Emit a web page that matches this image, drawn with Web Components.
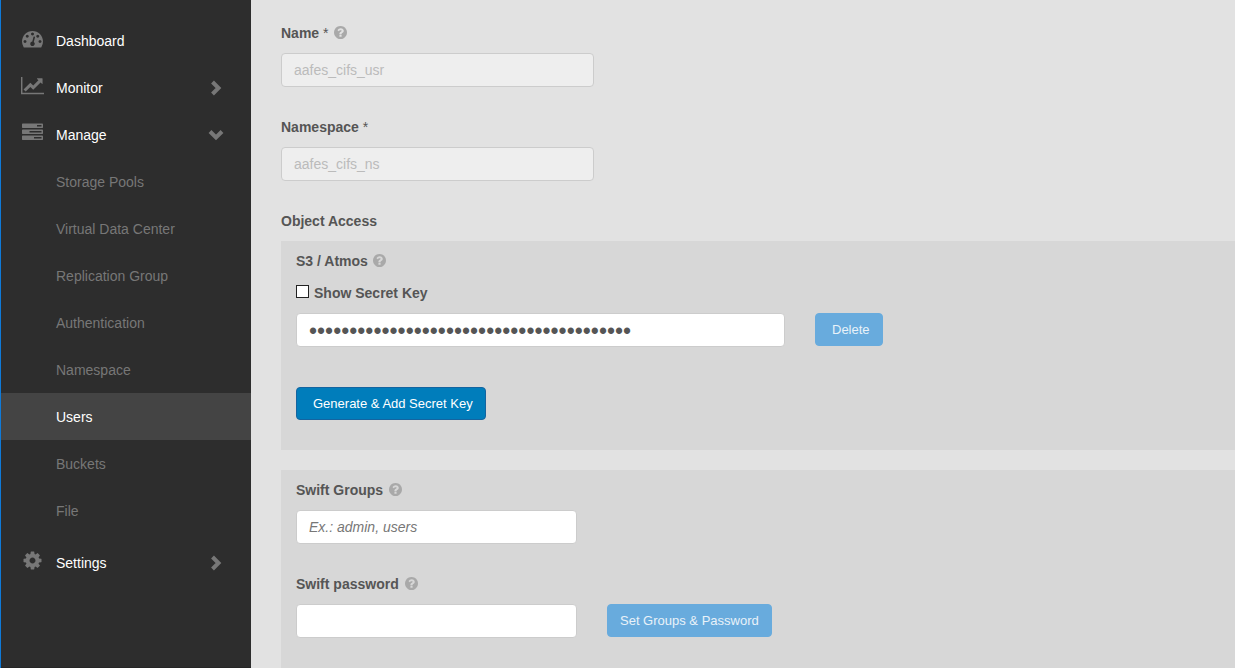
<!DOCTYPE html>
<html lang="en">
<head>
  <meta charset="utf-8">
  <meta name="viewport" content="width=device-width, initial-scale=1">
  <title>Users</title>
  <style>
    * {
      box-sizing: border-box;
    }
    body {
      margin: 0;
      font-family: "Liberation Sans", Arial, sans-serif;
      font-size: 14px;
      line-height: 20px;
      color: #555;
      background: #e2e2e2;
    }
  </style>
</head>
<body>
  <app-shell>
    <side-nav slot="nav">
      <nav-item icon="dashboard">Dashboard</nav-item>
      <nav-item icon="chart" chevron="right">Monitor</nav-item>
      <nav-item icon="tasks" chevron="down">Manage</nav-item>
      <nav-item sub>Storage Pools</nav-item>
      <nav-item sub>Virtual Data Center</nav-item>
      <nav-item sub>Replication Group</nav-item>
      <nav-item sub>Authentication</nav-item>
      <nav-item sub>Namespace</nav-item>
      <nav-item sub active>Users</nav-item>
      <nav-item sub>Buckets</nav-item>
      <nav-item sub class="last">File</nav-item>
      <nav-item icon="cog" chevron="right">Settings</nav-item>
    </side-nav>

    <form-field label="Name" required help value="aafes_cifs_usr" disabled size="medium"></form-field>
    <form-field label="Namespace" required value="aafes_cifs_ns" disabled size="medium"></form-field>

    <form-section heading="Object Access">
      <form-panel>
        <panel-title>S3 / Atmos</panel-title>
        <check-field>Show Secret Key</check-field>
        <form-field name="Secret key" type="password" value="0123456789012345678901234567890123456789" size="large">
          <action-button slot="action" muted inset>Delete</action-button>
        </form-field>
        <action-button inset class="generate">Generate &amp; Add Secret Key</action-button>
      </form-panel>
      <form-panel grow>
        <form-field label="Swift Groups" help placeholder="Ex.: admin, users"></form-field>
        <form-field label="Swift password" help type="password">
          <action-button slot="action" muted>Set Groups &amp; Password</action-button>
        </form-field>
      </form-panel>
    </form-section>
  </app-shell>

  <script>
    const ICONS = {
      dashboard: {
        box: '0 0 1792 1792',
        width: 21,
        path: 'M384 1152q0-53-37.5-90.5t-90.5-37.5-90.5 37.5-37.5 90.5 37.5 90.5 90.5 37.5 90.5-37.5 37.5-90.5zm192-448q0-53-37.5-90.5t-90.5-37.5-90.5 37.5-37.5 90.5 37.5 90.5 90.5 37.5 90.5-37.5 37.5-90.5zm428 481l101-382q6-26-7.5-48.5t-38.5-29.5-48 6.5-30 39.5l-101 382q-60 5-107 43.5t-63 98.5q-20 77 20 146t117 89 146-20 89-117q16-60-6-117t-72-91zm660-33q0-53-37.5-90.5t-90.5-37.5-90.5 37.5-37.5 90.5 37.5 90.5 90.5 37.5 90.5-37.5 37.5-90.5zm-640-640q0-53-37.5-90.5t-90.5-37.5-90.5 37.5-37.5 90.5 37.5 90.5 90.5 37.5 90.5-37.5 37.5-90.5zm448 192q0-53-37.5-90.5t-90.5-37.5-90.5 37.5-37.5 90.5 37.5 90.5 90.5 37.5 90.5-37.5 37.5-90.5zm320 448q0 261-141 483-19 29-54 29h-1402q-35 0-54-29-141-221-141-483 0-182 71-348t191-286 286-191 348-71 348 71 286 191 191 286 71 348z'
      },
      chart: {
        box: '0 0 2048 1792',
        width: 23,
        path: 'M2048 1536v128h-2048v-1536h128v1408h1920zm-128-1248v435q0 21-19.5 29.5t-35.5-7.5l-121-121-633 633q-10 10-23 10t-23-10l-233-233-416 416-192-192 585-585q10-10 23-10t23 10l233 233 464-464-121-121q-16-16-7.5-35.5t29.5-19.5h435q14 0 23 9t9 23z'
      },
      tasks: {
        box: '0 0 1792 1792',
        width: 21,
        path: 'M1024 1408h640v-128h-640v128zm-384-512h1024v-128h-1024v128zm640-512h384v-128h-384v128zm512 832v256q0 26-19 45t-45 19h-1664q-26 0-45-19t-19-45v-256q0-26 19-45t45-19h1664q26 0 45 19t19 45zm0-512v256q0 26-19 45t-45 19h-1664q-26 0-45-19t-19-45v-256q0-26 19-45t45-19h1664q26 0 45 19t19 45zm0-512v256q0 26-19 45t-45 19h-1664q-26 0-45-19t-19-45v-256q0-26 19-45t45-19h1664q26 0 45 19t19 45z'
      },
      cog: {
        box: '0 0 1792 1792',
        width: 21,
        path: 'M1152 896q0-106-75-181t-181-75-181 75-75 181 75 181 181 75 181-75 75-181zm512-109v222q0 12-8 23t-20 13l-185 28q-19 54-39 91 35 50 107 138 10 12 10 25t-9 23q-27 37-99 108t-94 71q-12 0-26-9l-138-108q-44 23-91 38-16 136-29 186-7 28-36 28h-222q-14 0-24.5-8.5t-11.5-21.5l-28-184q-49-16-90-37l-141 107q-10 9-25 9-14 0-25-11-126-114-165-168-7-10-7-23 0-12 8-23 15-21 51-66.5t54-70.5q-27-50-41-99l-183-27q-13-2-21-12.5t-8-23.5v-222q0-12 8-23t19-13l186-28q14-46 39-92-40-57-107-138-10-12-10-24 0-10 9-23 26-36 98.5-107.5t94.5-71.5q13 0 26 10l138 107q44-23 91-38 16-136 29-186 7-28 36-28h222q14 0 24.5 8.5t11.5 21.5l28 184q49 16 90 37l142-107q9-9 24-9 13 0 25 10 129 119 165 170 7 8 7 22 0 12-8 23-15 21-51 66.5t-54 70.5q26 50 41 98l183 28q13 2 21 12.5t8 23.5z'
      }
    };

    const CHEVRONS = {
      right: 'M4.5 2 L10.5 8 L4.5 14',
      down: 'M2 4.5 L8 10.5 L14 4.5'
    };

    class appShell extends HTMLElement {
      constructor() {
        super();
        this.attachShadow({mode: 'open'}).innerHTML = `
          <style>
            :host {
              display: flex;
              min-height: 100vh;
              border-left: 1px solid #0f7ad8;
              box-sizing: border-box;
            }
            main {
              flex: 1;
              min-width: 0;
              display: flex;
              flex-direction: column;
              gap: 30px;
              padding: 23px 0 0 30px;
            }
          </style>
          <slot name="nav"></slot>
          <main><slot></slot></main>
        `;
      }
    }

    class sideNav extends HTMLElement {
      constructor() {
        super();
        this.attachShadow({mode: 'open'}).innerHTML = `
          <style>
            :host {
              flex: 0 0 250px;
              display: block;
              box-sizing: border-box;
              background: #2d2d2d;
              border-bottom: 1px solid #262626;
            }
            nav {
              padding-top: 17px;
            }
            ::slotted(.last) {
              margin-bottom: 5px;
            }
          </style>
          <nav><slot></slot></nav>
        `;
      }
    }

    class navItem extends HTMLElement {
      constructor() {
        super();
        this.attachShadow({mode: 'open'});
      }

      connectedCallback() {
        const icon = ICONS[this.getAttribute('icon')];
        const chevron = CHEVRONS[this.getAttribute('chevron')];
        this.shadowRoot.innerHTML = `
          <style>
            :host {
              display: block;
              color: #fff;
            }
            :host([sub]) {
              color: #777;
            }
            :host([active]) {
              color: #fff;
              background: #444;
            }
            a {
              display: flex;
              align-items: center;
              gap: 12px;
              height: 47px;
              padding: 0 27px 0 20px;
              box-sizing: border-box;
              color: inherit;
              text-decoration: none;
            }
            .icon {
              flex: 0 0 23px;
              display: flex;
              justify-content: center;
              padding-bottom: 4px;
            }
            .icon svg {
              flex: none;
              fill: #777;
            }
            .text {
              flex: 1;
            }
            .chevron {
              fill: none;
              stroke: #777;
              stroke-width: 4;
            }
          </style>
          <a href="#">
            <span class="icon">${icon ? `<svg width="${icon.width}" height="21" viewBox="${icon.box}" aria-hidden="true"><path d="${icon.path}"/></svg>` : ''}</span>
            <span class="text"><slot></slot></span>
            ${chevron ? `<svg class="chevron" width="16" height="16" viewBox="0 0 16 16" aria-hidden="true"><path d="${chevron}"/></svg>` : ''}
          </a>
        `;
      }
    }

    class helpIcon extends HTMLElement {
      constructor() {
        super();
        this.attachShadow({mode: 'open'}).innerHTML = `
          <style>
            :host {
              display: flex;
              padding-bottom: 2px;
            }
            svg {
              fill: #a9a9a9;
            }
          </style>
          <svg width="13" height="13" viewBox="128 128 1536 1536" aria-hidden="true"><path d="M1024 1376v-192q0-14-9-23t-23-9h-192q-14 0-23 9t-9 23v192q0 14 9 23t23 9h192q14 0 23-9t9-23zm256-672q0-88-55.5-163t-138.5-116-170-41q-243 0-371 213-15 24 8 42l132 100q7 6 19 6 16 0 25-12 53-68 86-92 34-24 86-24 48 0 85.5 26t37.5 59q0 38-20 61t-68 45q-63 28-115.5 86.5t-52.5 125.5v36q0 14 9 23t23 9h192q14 0 23-9t9-23q0-19 21.5-49.5t54.5-49.5q32-18 49-28.5t46-35 44.5-48 28-60.5 12.5-81zm384 192q0 209-103 385.5t-279.5 279.5-385.5 103-385.5-103-279.5-279.5-103-385.5 103-385.5 279.5-279.5 385.5-103 385.5 103 279.5 279.5 103 385.5z"/></svg>
        `;
      }
    }

    class formField extends HTMLElement {
      constructor() {
        super();
        this.attachShadow({mode: 'open'});
      }

      connectedCallback() {
        const label = this.getAttribute('label');
        this.shadowRoot.innerHTML = `
          <style>
            :host {
              display: block;
              --width: 281px;
            }
            :host([size="medium"]) {
              --width: 313px;
            }
            :host([size="large"]) {
              --width: 489px;
            }
            .label {
              display: flex;
              align-items: center;
              gap: 6px;
              margin-bottom: 10px;
            }
            label {
              font-weight: bold;
            }
            .required {
              font-weight: normal;
            }
            .row {
              display: flex;
              align-items: flex-start;
              gap: 30px;
            }
            input {
              width: var(--width);
              min-width: 0;
              height: 34px;
              padding: 0 12px;
              box-sizing: border-box;
              border: 1px solid #ccc;
              border-radius: 4px;
              background: #fff;
              color: #555;
              font-family: inherit;
              font-size: 14px;
            }
            input[type="password"] {
              padding-top: 2px;
              font-size: 23px;
            }
            input:disabled {
              background: #eee;
              color: #bbb;
            }
            input::placeholder {
              color: #777;
              font-style: italic;
            }
          </style>
          ${label ? `<div class="label">
            <label for="input">${label}${this.hasAttribute('required') ? ' <span class="required">*</span>' : ''}</label>
            ${this.hasAttribute('help') ? '<help-icon></help-icon>' : ''}
          </div>` : ''}
          <div class="row">
            <input id="input" type="${this.getAttribute('type') || 'text'}">
            <slot name="action"></slot>
          </div>
        `;
        const input = this.shadowRoot.querySelector('input');
        input.value = this.getAttribute('value') || '';
        input.placeholder = this.getAttribute('placeholder') || '';
        input.disabled = this.hasAttribute('disabled');
        if (!label) {
          input.setAttribute('aria-label', this.getAttribute('name'));
        }
      }
    }

    class checkField extends HTMLElement {
      constructor() {
        super();
        this.attachShadow({mode: 'open'}).innerHTML = `
          <style>
            :host {
              display: block;
              margin: 12px 0 10px;
            }
            label {
              display: flex;
              align-items: center;
              gap: 5px;
              font-weight: bold;
            }
            input {
              appearance: none;
              width: 13px;
              height: 13px;
              margin: 0 0 4px;
              border: 1px solid #222;
              background: #fff;
            }
            input:checked {
              background: #222;
              box-shadow: inset 0 0 0 2px #fff;
            }
          </style>
          <label><input type="checkbox"><span><slot></slot></span></label>
        `;
      }
    }

    class panelTitle extends HTMLElement {
      constructor() {
        super();
        this.attachShadow({mode: 'open'}).innerHTML = `
          <style>
            :host {
              display: flex;
              align-items: center;
              gap: 5px;
              font-weight: bold;
            }
          </style>
          <span><slot></slot></span>
          <help-icon></help-icon>
        `;
      }
    }

    class actionButton extends HTMLElement {
      constructor() {
        super();
        this.attachShadow({mode: 'open'}).innerHTML = `
          <style>
            :host {
              display: block;
            }
            button {
              height: 33px;
              padding: 0 12px;
              border: 1px solid #1464a0;
              border-radius: 4px;
              background: #007dbb;
              color: #fff;
              font-family: inherit;
              font-size: 13px;
              white-space: nowrap;
              cursor: pointer;
            }
            :host([inset]) button {
              padding-left: 16px;
            }
            :host([muted]) button {
              border-color: #68abdd;
              background: #68abdd;
              color: #e9f2f9;
            }
          </style>
          <button type="button"><slot></slot></button>
        `;
      }
    }

    class formSection extends HTMLElement {
      constructor() {
        super();
        this.attachShadow({mode: 'open'}).innerHTML = `
          <style>
            :host {
              flex: 1;
              display: flex;
              flex-direction: column;
            }
            h2 {
              margin: 0 0 10px;
              font-size: 14px;
              line-height: 20px;
            }
            .panels {
              flex: 1;
              display: flex;
              flex-direction: column;
              gap: 20px;
            }
          </style>
          <h2>${this.getAttribute('heading')}</h2>
          <div class="panels"><slot></slot></div>
        `;
      }
    }

    class formPanel extends HTMLElement {
      constructor() {
        super();
        this.attachShadow({mode: 'open'}).innerHTML = `
          <style>
            :host {
              display: block;
              padding: 10px 15px 30px;
              background: #d7d7d7;
            }
            :host([grow]) {
              flex: 1;
            }
            ::slotted(form-field:not(:last-child)) {
              margin-bottom: 30px;
            }
            ::slotted(.generate) {
              margin-top: 40px;
            }
          </style>
          <slot></slot>
        `;
      }
    }

    customElements.define('app-shell', appShell);
    customElements.define('side-nav', sideNav);
    customElements.define('nav-item', navItem);
    customElements.define('help-icon', helpIcon);
    customElements.define('form-field', formField);
    customElements.define('check-field', checkField);
    customElements.define('panel-title', panelTitle);
    customElements.define('action-button', actionButton);
    customElements.define('form-section', formSection);
    customElements.define('form-panel', formPanel);
  </script>
</body>
</html>
